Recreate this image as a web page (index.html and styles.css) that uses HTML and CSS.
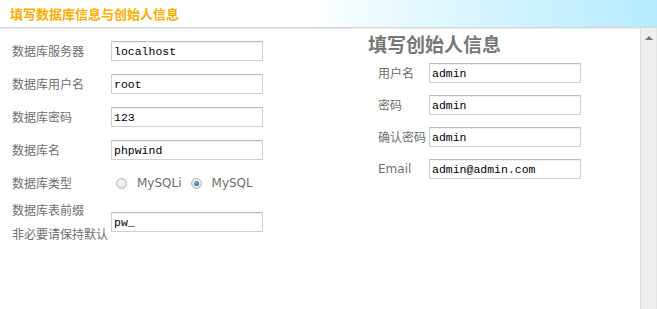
FILE: index.html
```html
<!DOCTYPE html>
<html lang="zh-CN">
<head>
<meta charset="utf-8">
<title>填写数据库信息与创始人信息</title>
<link rel="stylesheet" href="styles.css">
</head>
<body>
<div class="header"><h1 class="title">填写数据库信息与创始人信息</h1></div>
<div class="body">
  <div class="main">
    <section class="db">
      <div class="grid">
        <label class="lbl">数据库服务器</label><input class="inp" value="localhost">
        <label class="lbl">数据库用户名</label><input class="inp" value="root">
        <label class="lbl">数据库密码</label><input class="inp" value="123">
        <label class="lbl">数据库名</label><input class="inp" value="phpwind">
        <label class="lbl">数据库类型</label>
        <div class="radios">
          <span class="radio"></span><span class="rtext">MySQLi</span>
          <span class="radio on"></span><span class="rtext">MySQL</span>
        </div>
        <label class="lbl lbl2 pull">数据库表前缀<br>非必要请保持默认</label><input class="inp pull" value="pw_">
      </div>
    </section>
    <section class="founder">
      <h2 class="heading">填写创始人信息</h2>
      <div class="grid2">
        <label class="lbl">用户名</label><input class="inp" value="admin">
        <label class="lbl">密码</label><input class="inp" value="admin">
        <label class="lbl">确认密码</label><input class="inp" value="admin">
        <label class="lbl en">Email</label><input class="inp" value="admin@admin.com">
      </div>
    </section>
  </div>
  <div class="scrollbar"><span class="arrow"></span></div>
</div>
</body>
</html>
```
FILE: styles.css
```css
html, body { margin: 0; padding: 0; background: #fff; }
body { width: 657px; height: 309px; overflow: hidden; font-family: "Noto Sans CJK SC", "DejaVu Sans", sans-serif; }

.header {
  height: 27px;
  background: linear-gradient(to right, #ffffff 0%, #ffffff 46%, #d8f5ff 72%, #b4ebff 100%);
  border-bottom: 1px solid #d8d8d8;
  box-shadow: 0 1px 1px #ececec;
  display: flex;
  align-items: center;
  padding-left: 10px;
}
.title {
  margin: 0;
  font-size: 13px;
  font-weight: bold;
  color: #f7ae00;
  line-height: 16px;
}

.body { display: flex; height: 281px; }
.main { flex: 1; display: flex; }

.db { width: 368px; padding: 13px 0 0 12px; box-sizing: border-box; }
.grid {
  display: grid;
  grid-template-columns: 99px 152px;
  grid-auto-rows: minmax(20px, auto);
  row-gap: 13px;
  align-items: center;
}
.lbl { font-size: 12px; color: #6e6e6e; line-height: 16px; white-space: nowrap; }
.lbl2 { line-height: 24px; }
.pull { margin-top: -8px; }
.en { font-family: "DejaVu Sans", sans-serif; font-size: 12px; color: #707070; }

.inp {
  box-sizing: border-box;
  width: 152px;
  height: 20px;
  border: 1px solid #cfcfcf;
  border-top-color: #bdbdbd;
  box-shadow: inset 0 1px 1px #f0f0f0;
  padding: 0 2px;
  font-family: "Liberation Mono", "DejaVu Sans Mono", monospace;
  font-size: 11.5px;
  font-weight: normal;
  color: #000;
  background: #fff;
  outline: none;
}

.radios { display: flex; align-items: center; padding-left: 5px; font-family: "DejaVu Sans", sans-serif; font-size: 12px; color: #6e6e6e; }
.radio {
  width: 11px; height: 11px; border-radius: 50%;
  box-sizing: border-box;
  border: 1px solid #b5b5b5;
  background: radial-gradient(circle at 50% 40%, #fafafa 0%, #dcdcdc 100%);
  margin-right: 10px;
  position: relative;
}
.radio.on::after {
  content: ""; position: absolute; left: 2px; top: 2px;
  width: 5px; height: 5px; border-radius: 50%;
  background: radial-gradient(circle at 40% 35%, #6fb6ff 0%, #1a4f8c 100%);
}
.rtext { margin-right: 9px; }

.founder { padding: 4px 0 0 0; }
.heading {
  margin: 0 0 7px 0;
  font-size: 19px;
  line-height: 24px;
  font-weight: bold;
  color: #777;
}
.grid2 {
  display: grid;
  grid-template-columns: 51px 152px;
  grid-auto-rows: 20px;
  row-gap: 12px;
  align-items: center;
  margin-left: 10px;
}

.scrollbar {
  width: 17px;
  box-sizing: border-box;
  border-left: 1px solid #dcdcdc;
  border-right: 1px solid #e4e4e4;
  background: #efefef;
  display: flex;
  justify-content: center;
  padding-top: 8px;
}
.arrow {
  width: 0; height: 0;
  border-left: 4px solid transparent;
  border-right: 4px solid transparent;
  border-bottom: 4px solid #777;
}
```
